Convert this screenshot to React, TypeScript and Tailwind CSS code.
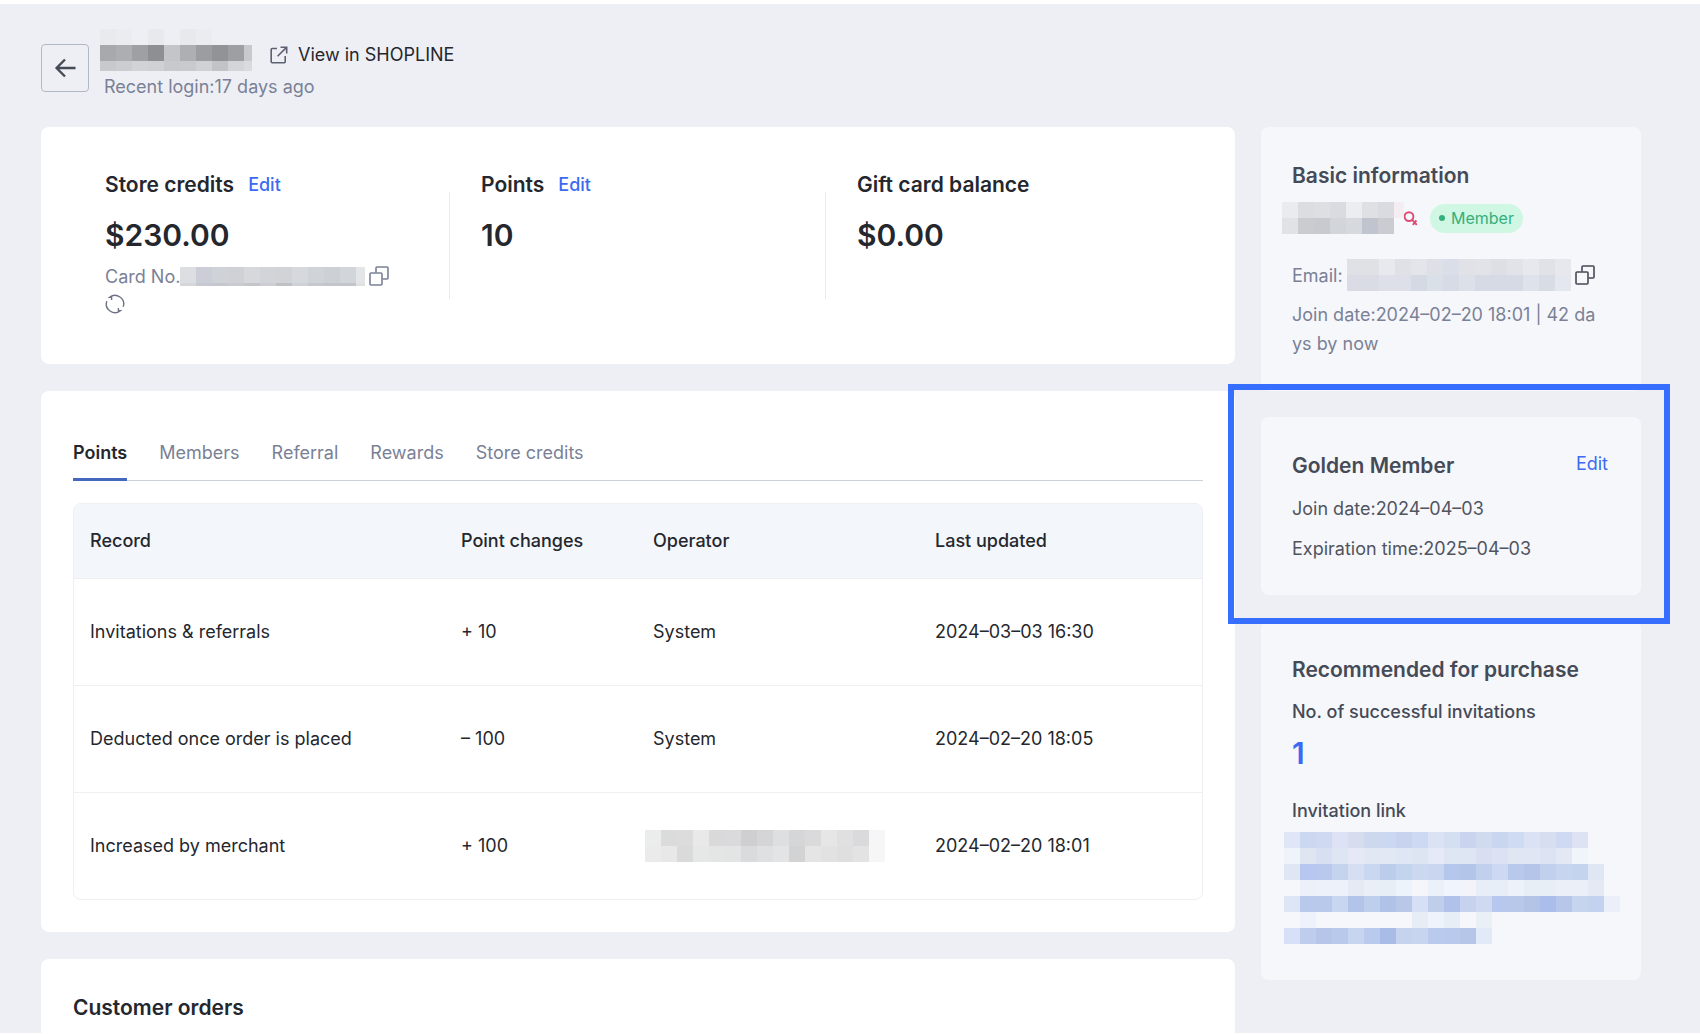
import React, { useState } from 'react'

type IconProps = { className?: string }

function ArrowLeftIcon({ className }: IconProps) {
  return (
    <svg className={className} width="22" height="20" viewBox="0 0 22 20" fill="none" stroke="currentColor" strokeWidth="2.4">
      <path d="M21.5 10H3M11 1.5L2.6 10l8.4 8.5" />
    </svg>
  )
}

function ExternalIcon({ className }: IconProps) {
  return (
    <svg className={className} width="18" height="18" viewBox="0 0 18 18" fill="none" stroke="currentColor" strokeWidth="1.6">
      <path d="M7 2.5H2.2a1 1 0 0 0-1 1v12.3a1 1 0 0 0 1 1h12a1 1 0 0 0 1-1V10M10.5 1.2h6.2v6.2M16.5 1.4L7.6 10.3" />
    </svg>
  )
}

function CopyIcon({ className }: IconProps) {
  return (
    <svg className={className} width="20" height="20" viewBox="0 0 20 20" fill="none" stroke="currentColor" strokeWidth="1.6">
      <rect x="1" y="7" width="12" height="12" rx="1" />
      <path d="M7 6.5V2a1 1 0 0 1 1-1h10a1 1 0 0 1 1 1v10a1 1 0 0 1-1 1h-4.5" />
    </svg>
  )
}

function RefreshIcon({ className }: IconProps) {
  return (
    <svg className={className} width="20" height="20" viewBox="0 0 20 20" fill="none" stroke="currentColor" strokeWidth="1.4">
      <path d="M6.6 6V3.2H4.6A8.7 8.7 0 0 1 18.2 12.8M13.4 14v2.8h2A8.7 8.7 0 0 1 1.8 7.2" />
    </svg>
  )
}

function FemaleIcon({ className }: IconProps) {
  return (
    <svg className={className} width="14" height="15" viewBox="0 0 14 15" fill="none" stroke="currentColor" strokeWidth="1.9">
      <circle cx="5" cy="5.6" r="4.4" />
      <path d="M8.2 8.8l4.6 5M12.4 9.4l-3.6 4.4" />
    </svg>
  )
}

// Redacted values are drawn as a grid of 16px blocks, '-' leaves a block empty
const CELL = 16

function Mosaic({ rows, width, height, className }: { rows: string[]; width: number; height: number; className?: string }) {
  return (
    <svg className={className} width={width} height={height} shapeRendering="crispEdges" aria-hidden="true">
      {rows.map((row, y) =>
        row.split(' ').map((color, x) =>
          color === '-' ? null : <rect key={`${x}-${y}`} x={x * CELL} y={y * CELL} width={CELL} height={CELL} fill={`#${color}`} />
        )
      )}
    </svg>
  )
}

const NAME_ROWS = [
  'e9eaed ebecef - e8e9ec - e8e9ec ebecef - - -',
  'a8a9ad adaeb2 9fa0a4 8e8f93 c4c5c9 aeafb3 9c9da1 929397 9e9fa3 c8c9cd',
  'c8c9cd cccdd1 d2d3d7 d0d1d5 c8c9cd c9cace d0d1d5 c2c3c7 d4d5d9 dadbdf',
]

const CARD_ROWS = [
  'dcdee2 cbced7 cfd2d7 cfd1d6 d6d8db d1d4d9 d2d3d7 d5d8dc d0d3d8 cdd0d5 d2d5da e4e5e7',
  'd4d6da c6c9d1 c4c7cc c9cbd0 c4c6ca ccced3 bfc1c5 ced1d5 c5c8cd c2c5ca c2c5ca e0e1e3',
]

const CUSTOMER_ROWS = [
  'eaebee dcdde1 dedfe3 dadbe0 ecedf0 dfe0e4 d9dbe0 f4eef3',
  'e1e2e6 cbccd0 c9cacf d2d6db d6d9de c0c4ce cbccd1 -',
]

const EMAIL_ROWS = [
  'e0e1e6 e0e1e5 e8e9ee dfe1e6 e4e5ea dde0e7 d9dee8 e0e2e7 e1e3e8 dddfe4 e1e3e8 e7e8ed e0e2e7 e6e8ed',
  'd9dce5 d9dce5 dde0e8 dde0e8 d5d9e3 dae0e8 d6dbe6 dce0e9 d6dae5 d6dae5 d6dae5 dee2eb d8dce5 e4e7ed',
]

const OPERATOR_ROWS = [
  'ebecec dbdbdb dcdcdc e9e9e9 d9d9da dadadc cfcfd1 d5d5d7 dedfe0 d6d6d8 dadadb e6e6e6 e0e0e0 dadadd f6f6f6',
  'ebebeb e8e8e8 dadada e5e8e7 e3e6e5 e3e5e5 d9dbdd dee0e2 e2e4e5 d3d3d4 e5e5e5 e2e2e2 dfdfdf e3e3e3 f6f6f6',
]

const LINK_ROWS = [
  'dfe6f5 ccd7f1 cfd9f2 dde3f4 d5ddef cdd8ef cad8f1 c7d3ef cdd8f2 dae2f4 d4dff1 c9d5ef d0dbef c9d6ef cfdaf3 dae2f4 d6deef cfd9f3 dde3f3',
  'eff3fa dfe6f2 d7e0f2 dfe6f3 e6e9f5 e1e8f3 e1e9f5 dfe6f5 dee5f2 e6e9f6 dfe6f3 dfe6f3 d9dff0 dce1f3 e0e6f2 e0e6f3 dce3f3 e4e7f4 f0f4fb',
  'dfe7f5 b7c7ef b9c9ee c5d4ee d6def3 c9d8f0 bccceb c3d4ef cbd8ef cad6f0 b5c7ed b3c5e8 c0d0ed cdd9f2 b9c9eb b4c5e9 c1d0ec c7d5ef c4d4ef dfe7f5',
  'f5f7fb ecf0f8 edf1f9 edf1f9 e6eaf4 e9eef7 e8eef6 edf3fa f4f6fa ebf1f8 f0f4fc f2f4f9 e8eef7 e8eef7 edf1f9 e8eef6 e8eef6 ebeff7 ebeff8 e4e9f4 f5f7fb',
  'dce6f4 b9c9eb b9c9eb c8d6ef b3c4ea becfed b1c2e9 b9c8e9 d5dff5 bfceeb b0c2ea c7d3ee cfdaf2 b6c8ee b8c8ea b3c4e7 abbdea b7c7e9 c6d4ed c2d2ef ebf0f8',
  'f5f7fb eef2fa f5f7fb - - f5f7fb f5f7fb - e7edf5 eef3fc e7eef6 f5f7fb e9f0f6 - - -',
  'd6e0f6 becdee b5c6ea b9c9ec c8d5ef bacaee a9bce8 c5d3ef c7d5ef bacaee b9c9ee b5c6e8 e2eaf7',
]

const TABS = ['Points', 'Members', 'Referral', 'Rewards', 'Store credits']

const RECORDS = [
  { record: 'Invitations & referrals', change: '+ 10', operator: 'System', updated: '2024–03–03 16:30' },
  { record: 'Deducted once order is placed', change: '– 100', operator: 'System', updated: '2024–02–20 18:05' },
  { record: 'Increased by merchant', change: '+ 100', operator: '', updated: '2024–02–20 18:01' },
]

function Header() {
  return (
    <header className="flex h-[123px] items-start gap-[11px] pt-[25px]">
      <button aria-label="Back" className="mt-[15px] flex size-12 shrink-0 items-center justify-center rounded border border-[#b1b8c8] text-[#454a57]">
        <ArrowLeftIcon />
      </button>
      <div>
        <div className="flex items-start">
          <Mosaic rows={NAME_ROWS} width={152} height={42} />
          <a href="#shopline" className="ml-[18px] mt-3 flex items-center gap-2.5 leading-7 text-[#25272e]">
            <ExternalIcon className="text-[#5c6170]" />
            View in SHOPLINE
          </a>
        </div>
        <p className="ml-1 mt-0.5 leading-7 text-[#7a8196]">Recent login:17 days ago</p>
      </div>
    </header>
  )
}

function Balances() {
  return (
    <section className="flex h-[237px] rounded-lg bg-white py-11 pl-16">
      <div className="relative w-[376px] shrink-0">
        <h2 className="flex items-center gap-3.5 text-[21px] font-semibold leading-7">
          Store credits
          <button className="text-[18px] font-medium text-[#3c6af0]">Edit</button>
        </h2>
        <p className="mt-[13px] text-[30px] font-semibold leading-[46px]">$230.00</p>
        <div className="mt-1 flex h-7 items-center text-[#7a8196]">
          <span>Card No.</span>
          <Mosaic rows={CARD_ROWS} width={185} height={19} />
          <button aria-label="Copy card number" className="ml-1">
            <CopyIcon />
          </button>
        </div>
        <button aria-label="Refresh" className="mt-1 block text-[#6d7383]">
          <RefreshIcon />
        </button>
        <div className="absolute right-[31px] top-[21px] h-[107px] w-px bg-[#e9eaee]" />
      </div>
      <div className="relative w-[376px] shrink-0">
        <h2 className="flex items-center gap-3.5 text-[21px] font-semibold leading-7">
          Points
          <button className="text-[18px] font-medium text-[#3c6af0]">Edit</button>
        </h2>
        <p className="mt-[13px] text-[30px] font-semibold leading-[46px]">10</p>
        <div className="absolute right-[31px] top-[21px] h-[107px] w-px bg-[#e9eaee]" />
      </div>
      <div>
        <h2 className="text-[21px] font-semibold leading-7">Gift card balance</h2>
        <p className="mt-[13px] text-[30px] font-semibold leading-[46px]">$0.00</p>
      </div>
    </section>
  )
}

function Records() {
  const [tab, setTab] = useState('Points')

  return (
    <section className="rounded-lg bg-white px-8 pb-8 pt-[42px]">
      <div role="tablist" className="flex gap-8 border-b border-[#ccd1dc]">
        {TABS.map((name) => (
          <button
            key={name}
            role="tab"
            aria-selected={tab === name}
            onClick={() => setTab(name)}
            className={
              tab === name
                ? '-mb-px h-12 border-b-[3px] border-[#4468bd] pb-1.5 font-semibold text-[#25272e]'
                : '-mb-px h-12 border-b-[3px] border-transparent pb-1.5 text-[#7a8196]'
            }
          >
            {name}
          </button>
        ))}
      </div>
      <div className="mt-[22px] overflow-hidden rounded-lg border border-[#edeff3]">
        <table className="w-full table-fixed text-left">
          <thead className="h-[74px] bg-[#f3f6fb]">
            <tr>
              <th className="w-[371px] pl-4 font-medium">Record</th>
              <th className="w-48 pl-4 font-medium">Point changes</th>
              <th className="w-[282px] pl-4 font-medium">Operator</th>
              <th className="pl-4 font-medium">Last updated</th>
            </tr>
          </thead>
          <tbody>
            {RECORDS.map((r) => (
              <tr key={r.record} className="h-[107px] border-t border-[#edeff3]">
                <td className="pl-4">{r.record}</td>
                <td className="pl-4">{r.change}</td>
                <td className={r.operator ? 'pl-4' : 'pl-2'}>
                  {r.operator || <Mosaic rows={OPERATOR_ROWS} width={240} height={32} />}
                </td>
                <td className="pl-4">{r.updated}</td>
              </tr>
            ))}
          </tbody>
        </table>
      </div>
    </section>
  )
}

function BasicInfo() {
  return (
    <section className="h-[264px] rounded-lg bg-[#f6f7fb] px-[31px] pt-[35px] text-[#7a8196]">
      <h2 className="text-[21px] font-semibold leading-7 text-[#454a57]">Basic information</h2>
      <div className="-ml-2.5 mt-3 flex h-8 items-center">
        <Mosaic rows={CUSTOMER_ROWS} width={122} height={32} />
        <FemaleIcon className="text-[#dd4a72]" />
        <span className="ml-3 flex h-[29px] items-center gap-1.5 rounded-full bg-[#cff7e3] px-[9px] text-[16px] text-[#34b07e]">
          <span className="size-1.5 rounded-full bg-[#34b07e]" />
          Member
        </span>
      </div>
      <div className="mt-[25px] flex h-8 items-center">
        <span>Email:</span>
        <Mosaic rows={EMAIL_ROWS} width={224} height={32} className="ml-1" />
        <button aria-label="Copy email" className="ml-1 text-[#454a57]">
          <CopyIcon />
        </button>
      </div>
      <p className="mt-[9px] break-all pr-2.5 leading-[29px]">Join date:2024–02–20 18:01 | 42 days by now</p>
    </section>
  )
}

function Membership() {
  return (
    <div className="relative">
      <section className="rounded-lg bg-[#f6f7fb] px-[31px] pb-[33px] pt-[35px] text-[#50545f]">
        <div className="flex items-start justify-between">
          <h2 className="text-[21px] font-semibold leading-7 text-[#454a57]">Golden Member</h2>
          <button className="pr-0.5 leading-6 text-[#3c6af0]">Edit</button>
        </div>
        <p className="mt-[15px] leading-[27px]">Join date:2024–04–03</p>
        <p className="mt-[13px] leading-[27px]">Expiration time:2025–04–03</p>
      </section>
      {/* Highlight frame around the tier card */}
      <div className="pointer-events-none absolute -bottom-[29px] -left-[33px] -right-[29px] -top-[33px] border-[6px] border-[#366fff]" />
    </div>
  )
}

function Referral() {
  return (
    <section className="rounded-lg bg-[#f6f7fb] px-[31px] pb-9 pt-[35px] text-[#454a57]">
      <h2 className="text-[21px] font-semibold leading-7">Recommended for purchase</h2>
      <p className="mt-3.5 font-medium leading-7">No. of successful invitations</p>
      <p className="mt-1 text-[30px] font-semibold leading-[46px] text-[#3c6af0]">1</p>
      <h3 className="mt-[21px] font-medium leading-7">Invitation link</h3>
      <Mosaic rows={LINK_ROWS} width={336} height={112} className="-ml-2 mt-[7px]" />
    </section>
  )
}

export default function App() {
  return (
    <div className="flex min-h-screen flex-col bg-white pb-px pt-1 text-[18px] text-[#25272e] [font-family:Inter,'Liberation_Sans',sans-serif]">
      <div className="flex grow flex-col bg-[#eeeff4] pl-[41px] pr-[59px]">
        <Header />
        <div className="flex grow gap-[26px]">
          <main className="flex min-w-0 grow flex-col gap-[27px]">
            <Balances />
            <Records />
            <section className="grow rounded-t-lg bg-white px-8 pt-[35px]">
              <h2 className="text-[21px] font-semibold leading-7">Customer orders</h2>
            </section>
          </main>
          <aside className="flex w-[380px] shrink-0 flex-col gap-[26px]">
            <BasicInfo />
            <Membership />
            <Referral />
          </aside>
        </div>
      </div>
    </div>
  )
}
